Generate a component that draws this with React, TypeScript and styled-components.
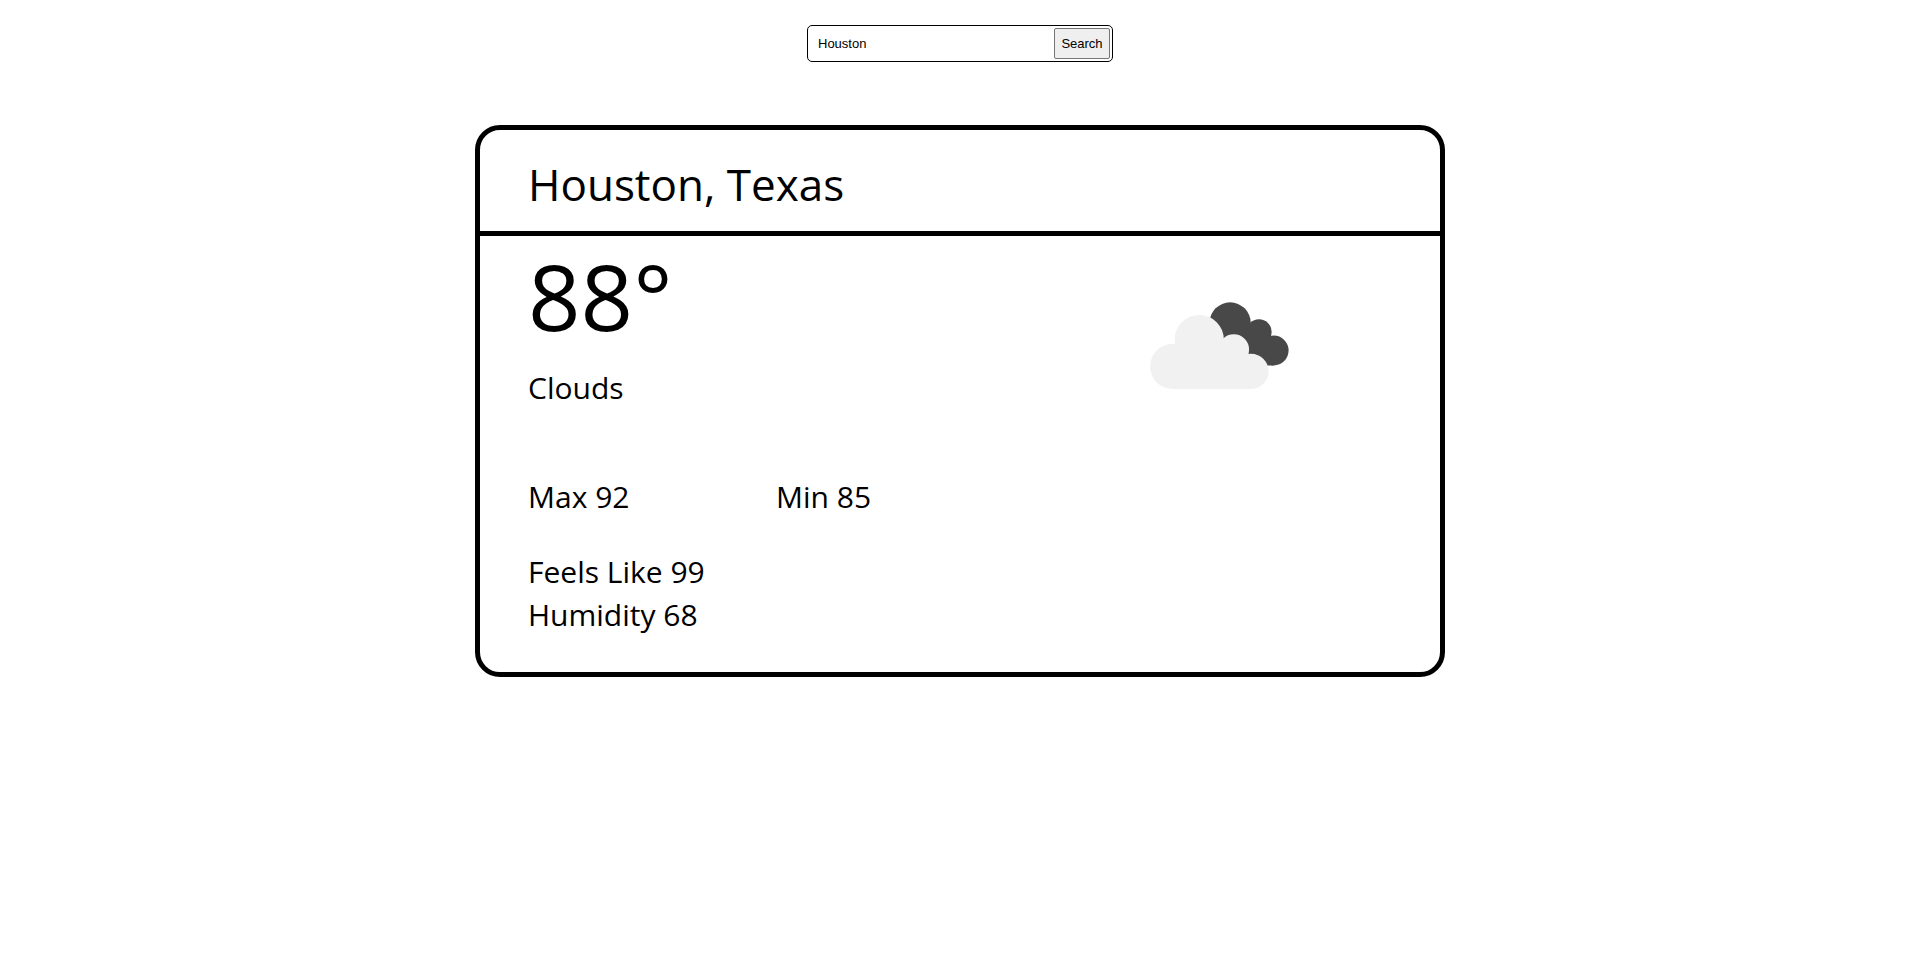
import React, { useState } from "react";
import styled, { createGlobalStyle } from "styled-components";

const GlobalStyle = createGlobalStyle`
  body {
    margin: 0;
    background: #fff;
    color: #000;
    font-family: "Segoe UI", "Open Sans", "Noto Sans", sans-serif;
  }
`;

const Page = styled.main`
  display: flex;
  flex-direction: column;
  align-items: center;
  gap: 63px;
  padding: 25px 0;
`;

const SearchForm = styled.form`
  display: flex;
  box-sizing: border-box;
  width: 306px;
  max-width: 100%;
  padding: 2px;
  border: 1px solid #000;
  border-radius: 5px;
`;

const SearchInput = styled.input`
  flex: 1;
  min-width: 0;
  padding: 0 8px;
  border: 0;
  outline: 0;
  background: transparent;
  color: #000;
  font: 13px "Liberation Sans", Arial, sans-serif;
`;

const SearchButton = styled.button`
  width: 56px;
  height: 31px;
  padding: 0;
  border: 1px solid #767676;
  border-radius: 2px;
  background: #efefef;
  color: #000;
  font: 13px "Liberation Sans", Arial, sans-serif;
`;

const Card = styled.article`
  width: 50%;
  min-width: 640px;
  border: 5px solid #000;
  border-radius: 25px;
`;

const CardHeader = styled.header`
  padding: 22px 48px 15px;
  border-bottom: 5px solid #000;
`;

const Place = styled.h1`
  margin: 0;
  font-size: 44px;
  font-weight: 400;
  line-height: 64px;
`;

const CardBody = styled.div`
  display: grid;
  grid-template-columns: 1fr 1fr;
  padding: 12px 48px 36px;
`;

const Temperature = styled.p`
  margin: 0 0 22px;
  font-size: 92px;
  line-height: 96px;
`;

const Reading = styled.p`
  margin: 0;
  font-size: 30px;
  line-height: 43px;
`;

const Range = styled.div`
  display: grid;
  grid-template-columns: 1fr 1fr;
  column-gap: 64px;
  margin: 66px 0 32px;
`;

const IconArea = styled.div`
  padding: 54px 0 0 190px;
`;

function CloudsIcon() {
  return (
    <svg width="139" height="87" viewBox="60 68 418 262" role="img" aria-label="Clouds">
      <g fill="#484849">
        <circle cx="301" cy="131" r="62" />
        <circle cx="388" cy="158" r="38" />
        <circle cx="432" cy="214" r="45" />
        <path d="M301 131L388 158L432 214V259H300Z" />
      </g>
      <g fill="#f1f1f1">
        <circle cx="208" cy="181" r="74" />
        <circle cx="128" cy="262" r="68" />
        <circle cx="312" cy="211" r="46" />
        <circle cx="364" cy="277" r="53" />
        <path d="M128 262L208 181L312 211L364 277V330H128Z" />
      </g>
    </svg>
  );
}

export default function App() {
  const [city, setCity] = useState("Houston");
  return (
    <>
      <GlobalStyle />
      <Page>
        <SearchForm role="search" onSubmit={(e: React.FormEvent) => e.preventDefault()}>
          <SearchInput
            type="text"
            aria-label="City"
            value={city}
            onChange={(e: React.ChangeEvent<HTMLInputElement>) => setCity(e.target.value)}
          />
          <SearchButton type="submit">Search</SearchButton>
        </SearchForm>
        <Card>
          <CardHeader>
            <Place>Houston, Texas</Place>
          </CardHeader>
          <CardBody>
            <div>
              <Temperature>88°</Temperature>
              <Reading>Clouds</Reading>
              <Range>
                <Reading>Max 92</Reading>
                <Reading>Min 85</Reading>
              </Range>
              <Reading>Feels Like 99</Reading>
              <Reading>Humidity 68</Reading>
            </div>
            <IconArea>
              <CloudsIcon />
            </IconArea>
          </CardBody>
        </Card>
      </Page>
    </>
  );
}
